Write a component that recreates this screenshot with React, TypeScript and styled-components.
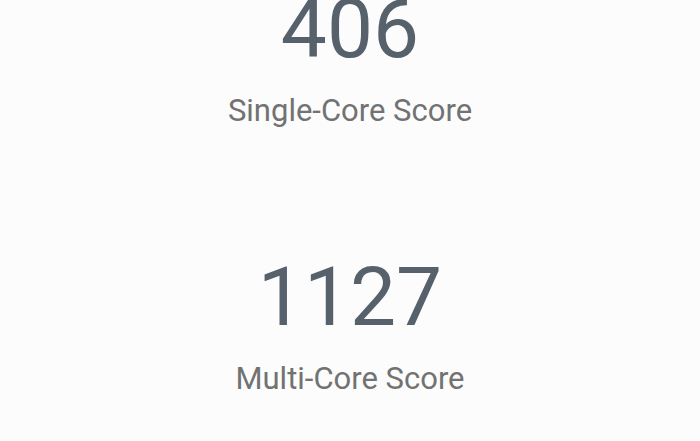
import React from 'react'
import styled, { createGlobalStyle } from 'styled-components'

const GlobalStyle = createGlobalStyle`
    html, body {
        margin: 0;
        padding: 0;
        background: #fcfcfc;
        overflow: hidden;
    }
`

const StyledScores = styled.main`
    display: flex;
    flex-direction: column;
    align-items: center;
    gap: 120px;
    margin-top: -19px;
    font-family: Roboto, "Liberation Sans", sans-serif;
`

const ScoreBlock = styled.section`
    display: flex;
    flex-direction: column;
    align-items: center;
    gap: 16px;
`

const Value = styled.div`
    font-size: 82px;
    line-height: 96px;
    font-weight: 400;
    color: #56616c;
`

const Label = styled.div`
    font-size: 31px;
    line-height: 36px;
    color: #727272;
`

const scores = [
    { value: 406, label: 'Single-Core Score' },
    { value: 1127, label: 'Multi-Core Score' },
]

const App = () => {
    return (
        <>
            <GlobalStyle />
            <StyledScores>
                {scores.map((s) => (
                    <ScoreBlock key={s.label}>
                        <Value>{s.value}</Value>
                        <Label>{s.label}</Label>
                    </ScoreBlock>
                ))}
            </StyledScores>
        </>
    )
}

export default App
